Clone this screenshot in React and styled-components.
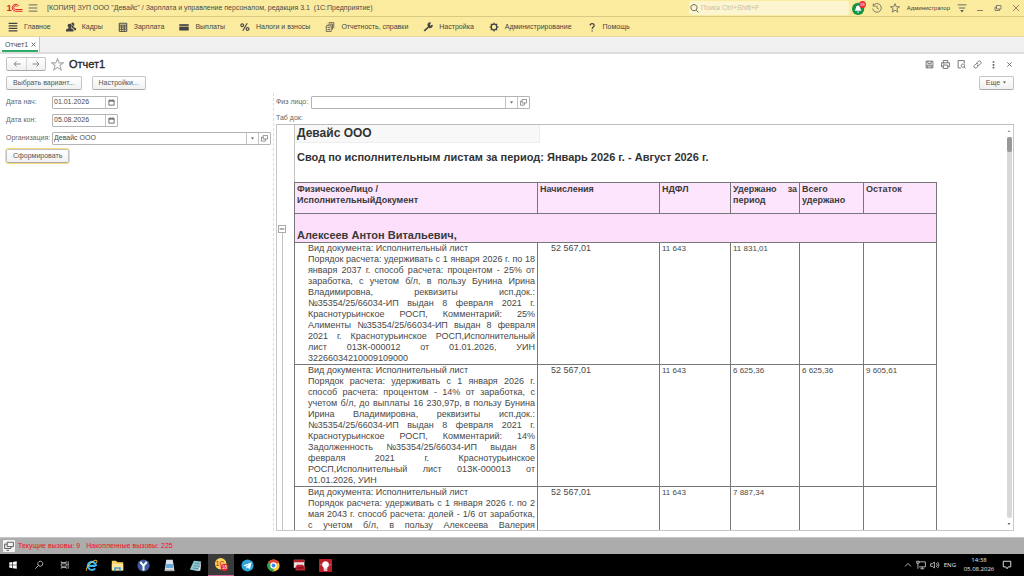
import styled, { createGlobalStyle, css } from 'styled-components';

const GlobalStyle = createGlobalStyle`
  * {
    box-sizing: border-box;
  }
  body {
    margin: 0;
    font-family: 'Liberation Sans', Arial, sans-serif;
    font-size: 7px;
    line-height: 10px;
    color: #4a4a4a;
    background: #fff;
  }
  button,
  input {
    margin: 0;
    font: inherit;
    color: inherit;
  }
`;

const Page = styled.div`
  display: flex;
  flex-direction: column;
  height: 100vh;
  overflow: hidden;
`;

const TitleBar = styled.header`
  display: flex;
  align-items: center;
  flex: none;
  height: 17px;
  padding: 0 2px 0 6px;
  gap: 4px;
  background: #fbeb9e;
  border-bottom: 1px solid #d8ca83;
`;

const AppTitle = styled.span`
  flex: 1;
  padding-left: 4px;
  white-space: nowrap;
`;

const IconButton = styled.button`
  display: flex;
  align-items: center;
  justify-content: center;
  flex: none;
  width: ${(props) => props.$width || 12}px;
  height: 12px;
  padding: 0;
  border: none;
  background: none;
  color: #606060;
`;

const Search = styled.label`
  display: flex;
  align-items: center;
  width: 160px;
  height: 14px;
  padding-left: 1px;
  gap: 2px;
  border-radius: 2px;
  background: #fdf5cf;
`;

const SearchInput = styled.input`
  flex: 1;
  min-width: 0;
  padding: 0;
  border: none;
  outline: none;
  background: none;
  &::placeholder {
    color: #c4bda0;
  }
`;

const WindowTools = styled.div`
  display: flex;
  align-items: center;
  gap: 6px;
`;

const User = styled.span`
  font-size: 6px;
  color: #3c3c3c;
`;

const Menu = styled.nav`
  display: flex;
  align-items: center;
  flex: none;
  height: 20px;
  padding: 0 8px;
  gap: 15px;
  background: #fbeb9e;
  border-bottom: 1px solid #e4d9a0;
`;

const MenuItem = styled.a`
  display: flex;
  align-items: center;
  gap: 6px;
  color: #444;
  text-decoration: none;
  white-space: nowrap;
`;

const TabBar = styled.div`
  display: flex;
  flex: none;
  height: 17px;
  background: #f0f0f0;
  border-bottom: 2px solid #dedede;
`;

const Tab = styled.div`
  display: flex;
  align-items: center;
  gap: 1px;
  padding: 0 2px 0 5px;
  background: linear-gradient(#2fae68, #2fae68) 2px 100% / 36px 2px no-repeat #fff;
  border-right: 1px solid #c4c4c4;
`;

const Form = styled.main`
  display: flex;
  flex-direction: column;
  flex: 1;
  min-height: 0;
  padding: 1px 10px 6px 6px;
`;

const Row = styled.div`
  display: flex;
  align-items: center;
  flex: none;
  height: ${(props) => props.$height || 18}px;
  gap: ${(props) => props.$gap || 0}px;
`;

const Spacer = styled.div`
  flex: 1;
`;

const Heading = styled.h1`
  margin: 0;
  font-size: 11px;
  font-weight: normal;
  line-height: 13px;
  color: #222;
  -webkit-text-stroke: 0.3px #222;
`;

const raised = css`
  border: 1px solid #c3c3c3;
  border-bottom-color: #a8a8a8;
  border-radius: 2px;
  background: linear-gradient(#fff, #f0f0f0);
`;

const History = styled.div`
  ${raised}
  display: flex;
  height: 14px;
  button + button {
    border-left: 1px solid #d4d4d4;
  }
`;

const Button = styled.button`
  ${raised}
  height: 14px;
  padding: 0 6px;
  white-space: nowrap;
  color: #555;
  outline: ${(props) => (props.$main ? '1px solid #f9dc7a' : 'none')};
`;

const Columns = styled.div`
  display: flex;
  flex: 1;
  min-height: 0;
`;

const Side = styled.section`
  flex: none;
  width: 268px;
  border-right: 1px dashed #ddd;
`;

const Content = styled.section`
  display: flex;
  flex-direction: column;
  flex: 1;
  min-width: 0;
  padding-left: 2px;
`;

const Label = styled.label`
  flex: none;
  width: ${(props) => props.$width}px;
  color: #666;
`;

const Field = styled.div`
  display: flex;
  width: ${(props) => props.$width}px;
  height: 13px;
  border: 1px solid #b4b4b4;
  border-radius: 1px;
  background: #fff;
  button {
    height: 11px;
    border-left: 1px solid #c4c4c4;
  }
`;

const FieldInput = styled.input`
  flex: 1;
  min-width: 0;
  padding: 0 1px;
  border: none;
  outline: none;
  background: none;
`;

const Sheet = styled.div`
  display: flex;
  flex: 1;
  min-height: 0;
  overflow: hidden;
  border: 1px solid #c8c8c8;
  border-top-color: #bdbdbd;
`;

const Gutter = styled.div`
  display: flex;
  flex-direction: column;
  flex: none;
  width: 17px;
  padding: 100px 0 0 1px;
`;

const Toggle = styled.button`
  display: flex;
  align-items: center;
  justify-content: center;
  width: 8px;
  height: 8px;
  padding: 0;
  border: 1px solid #aaa;
  background: #fff;
  color: #777;
`;

const GroupLine = styled.div`
  flex: 1;
  margin-left: 4px;
  border-left: 1px solid #c4c4c4;
`;

const Report = styled.div`
  flex: 1;
  min-width: 0;
  border-left: 1px solid #c4c4c4;
  color: #484848;
`;

const Company = styled.h2`
  width: 245px;
  height: 18px;
  margin: 0;
  padding-left: 2px;
  font-size: 12px;
  line-height: 17px;
  color: #333;
  background: #f8f8f8;
  border-right: 1px solid #eee;
  border-bottom: 1px solid #eee;
`;

const ReportTitle = styled.h3`
  height: 39px;
  margin: 0;
  padding: 8px 0 0 2px;
  font-size: 11px;
  line-height: 13px;
  color: #333;
  white-space: nowrap;
`;

const Table = styled.table`
  width: 643px;
  margin-left: -1px;
  table-layout: fixed;
  border-collapse: collapse;
`;

const HeadCell = styled.th`
  height: 31px;
  padding: 1px 2px 0;
  border: 1px solid #777;
  background: #fde5fd;
  font-size: 9px;
  line-height: 11px;
  color: #3a3a3a;
  text-align: justify;
  vertical-align: top;
  white-space: pre-line;
`;

const GroupCell = styled.th`
  height: 29px;
  padding: 0 2px;
  border: 1px solid #777;
  background: #fddffb;
  font-size: 11px;
  line-height: 13px;
  color: #3a3a3a;
  text-align: left;
  vertical-align: bottom;
`;

const Cell = styled.td`
  height: 122px;
  padding: ${(props) => (props.$indent ? '0 2px 0 13px' : '0 2px')};
  border: 1px solid #777;
  font-size: ${(props) => (props.$indent ? 9 : 8)}px;
  line-height: 11px;
  text-align: justify;
  vertical-align: top;
`;

const Paragraph = styled.p`
  margin: 0;
  text-align-last: ${(props) => (props.$full ? 'justify' : 'auto')};
`;

// keeps the number sign next to its digits in justified lines
const CaseNumber = styled.span`
  display: inline-block;
  text-align: left;
  white-space: nowrap;
`;

const ScrollBar = styled.div`
  display: flex;
  flex-direction: column;
  align-items: center;
  flex: none;
  width: 8px;
  padding: 4px 0;
  gap: 4px;
`;

const Track = styled.div`
  flex: 1;
  width: 5px;
  border-radius: 2px;
  background: #d8d8d8;
`;

const Thumb = styled.div`
  height: 15px;
  border-radius: 2px;
  background: #999;
`;

const StatusBar = styled.footer`
  display: flex;
  align-items: center;
  flex: none;
  height: 17px;
  padding-left: 3px;
  gap: 3px;
  background: #acacac;
  border-top: 1px solid #c8c8c8;
  color: #f01018;
`;

const StatusButton = styled(IconButton)`
  background: #f3f3f3;
  border-radius: 1px;
`;

const StatusText = styled.span`
  margin-right: 3px;
`;

const TaskBar = styled.nav`
  display: flex;
  align-items: center;
  flex: none;
  height: 22px;
  background: #000;
  color: #e8e8e8;
`;

const TaskButton = styled.button`
  display: flex;
  align-items: center;
  justify-content: center;
  width: 26px;
  height: 22px;
  padding: 0;
  border: none;
  background: ${(props) => (props.$active ? '#3a3a3a' : 'none')};
  border-bottom: ${(props) => (props.$active ? '1px solid #d9639b' : 'none')};
`;

const Tray = styled.div`
  display: flex;
  align-items: center;
  gap: 4px;
  margin-left: auto;
  padding-right: 12px;
  font-family: 'Open Sans', 'Noto Sans', sans-serif;
  font-size: 6px;
`;

const Clock = styled.time`
  width: 38px;
  line-height: 9px;
  text-align: center;
`;

function Icon({ size = 10, box = 16, children, ...rest }) {
  return (
    <svg
      width={size}
      height={size}
      viewBox={`0 0 ${box} ${box}`}
      fill="none"
      stroke="currentColor"
      strokeWidth="1.5"
      aria-hidden="true"
      {...rest}
    >
      {children}
    </svg>
  );
}

const Logo = () => (
  <svg width="17" height="12" viewBox="0 0 34 24" aria-label="1С">
    <text x="1" y="18" fontSize="19" fontWeight="bold" fill="#e0262d">1</text>
    <path
      d="M25.500 8A7 7 0 1 0 19 18.500H33M22.500 9.500A3.800 3.800 0 1 0 19 15H33"
      fill="none"
      stroke="#e0262d"
      strokeWidth="2"
    />
  </svg>
);

const Burger = () => (
  <Icon><path d="M1 3H15M1 8H15M1 13H15" /></Icon>
);
const StarIcon = ({ size, color }) => (
  <Icon size={size} color={color} strokeWidth="1.3">
    <path d="M8 1L10 6H15.300L11 9.300L12.600 14.700L8 11.500L3.400 14.700L5 9.300L0.700 6H6Z" />
  </Icon>
);
const CloseIcon = ({ size = 8, weight = 1.5 }) => (
  <Icon size={size} strokeWidth={weight}><path d="M2 2L14 14M14 2L2 14" /></Icon>
);
const OpenIcon = () => (
  <Icon size={7}><path d="M5 1H15V9H5ZM5 5H1V14H10V9" /></Icon>
);
const DropIcon = () => (
  <Icon size={5}><path d="M3 5H13L8 11Z" fill="currentColor" stroke="none" /></Icon>
);
const CalendarIcon = () => (
  <Icon size={7}><path d="M2 3H14V14H2ZM2 5H14M5 1V4M11 1V4" strokeWidth="2" /></Icon>
);

const menu = [
  ['Главное', <path d="M1 2H15M1 6H15M1 10H15M1 14H15" strokeWidth="2" />],
  ['Кадры', <path d="M6 3a3 3 0 0 1 2 5.500V10l4 2v3H0v-3l4-2V8.500A3 3 0 0 1 6 3M10 1a3 3 0 0 1 2 5.500V8l4 2v3h-3v-2l-4-2V8a4 4 0 0 0-1-6z" fill="currentColor" stroke="none" />],
  ['Зарплата', <path d="M2 2H14V15H2ZM2 5H14M2 8H14M2 11.500H14M6 5V15M10 5V15" />],
  ['Выплаты', <path d="M1 4H15V6H1ZM1 8H15V13H1Z" fill="currentColor" strokeWidth="1" />],
  ['Налоги и взносы', <path d="M3.500 3a2.200 2.200 0 1 0 .1 0M12 9a2.200 2.200 0 1 0 .1 0M11.500 2L4.500 14" strokeWidth="1.800" />],
  ['Отчетность, справки', <path d="M6 1H14V10M4 3.500H12V12M2 6H10V15H2ZM4 9H8M4 12H8" strokeWidth="1.200" />],
  ['Настройка', <path d="M1 13L8 7a4 4 0 0 1 5-6L11 4l1 2 3-2a4 4 0 0 1-6 5L3 15Z" fill="currentColor" stroke="none" />],
  ['Администрирование', <><circle cx="8" cy="8" r="4.500" strokeWidth="2" /><path d="M8 1V4M8 12V15M1 8H4M12 8H15M3 3L5 5M11 11L13 13M13 3L11 5M3 13L5 11" strokeWidth="2" /></>],
  ['Помощь', <path d="M5 5.500C5 1.500 11.500 1.500 11.500 5.500C11.500 8 8.200 8 8.200 11M8.200 13V15" strokeWidth="2" />],
];

const columns = [243, 122, 71, 69, 64, 73];

const heads = [
  'ФизическоеЛицо /\nИсполнительныйДокумент',
  'Начисления',
  'НДФЛ',
  'Удержано за период',
  'Всего удержано',
  'Остаток',
];

const rows = [
  {
    text: 'Порядок расчета: удерживать с 1 января 2026 г. по 18 января 2037 г. способ расчета: процентом - 25% от заработка, с учетом б/л, в пользу Бунина Ирина Владимировна, реквизиты исп.док.: №35354/25/66034-ИП выдан 8 февраля 2021 г. Краснотурьинское РОСП, Комментарий: 25% Алименты №35354/25/66034-ИП выдан 8 февраля 2021 г. Краснотурьинское РОСП,Исполнительный лист 01ЗК-000012 от 01.01.2026, УИН 32266034210009109000',
    values: ['11 643', '11 831,01', '', ''],
  },
  {
    text: 'Порядок расчета: удерживать с 1 января 2026 г. способ расчета: процентом - 14% от заработка, с учетом б/л, до выплаты 16 230,97р, в пользу Бунина Ирина Владимировна, реквизиты исп.док.: №35354/25/66034-ИП выдан 8 февраля 2021 г. Краснотурьинское РОСП, Комментарий: 14% Задолженность №35354/25/66034-ИП выдан 8 февраля 2021 г. Краснотурьинское РОСП,Исполнительный лист 01ЗК-000013 от 01.01.2026, УИН',
    values: ['11 643', '6 625,36', '6 625,36', '9 605,61'],
  },
  {
    text: 'Порядок расчета: удерживать с 1 января 2026 г. по 2 мая 2043 г. способ расчета: долей - 1/6 от заработка, с учетом б/л, в пользу Алексеева Валерия',
    values: ['11 643', '7 887,34', '', ''],
    full: true,
  },
];

const tasks = [
  ['Пуск', <path d="M2 4L7 3V7.500H2ZM8 3L14 2V7.500H8ZM2 8.500H7V13L2 12ZM8 8.500H14V14L8 13Z" fill="#fff" stroke="none" />],
  ['Поиск', <path d="M10 2a4 4 0 1 0 .1 0M7 9L2 14" strokeWidth="1.200" />],
  ['Представление задач', <path d="M2 2V4H10V2M2 14V12H10V14M2 6H10V10H2ZM13 2V14M12 7H14" strokeWidth="1.100" />],
  ['Internet Explorer', <><path d="M13 8.500H5M13.500 8.500A5 5 0 1 0 12.500 11.500" stroke="#39b8f2" strokeWidth="2.600" /><path d="M2 14.500C0 11 9 1.500 13.500 1.500C15 1.500 15 3.500 14 5" stroke="#f5c736" strokeWidth="1.200" /></>],
  ['Проводник', <><path d="M1 2H6L8 4H15V14H1Z" fill="#f8d264" stroke="none" /><path d="M1 6H15V14H1Z" fill="#ffe596" stroke="none" /><path d="M4 15V10H12V15H10V12H6V15Z" fill="#3b9ad9" stroke="none" /></>],
  ['Яндекс Браузер', <><circle cx="8" cy="8" r="7.500" fill="#405b9b" stroke="none" /><path d="M4 3.500L8 8.500L12 3.500M8 8V14" stroke="#fff" strokeWidth="2.500" /></>],
  ['Сервер', <><path d="M4 1H12L14 14H2Z" fill="#d9e3e8" stroke="none" /><path d="M4 6H12L12.500 11H3.500Z" fill="#68a8d8" stroke="none" /><path d="M2 13H14V15H2Z" fill="#aaa" stroke="none" /></>],
  ['Блокнот', <><path d="M6 2L15 3L11 15L1 13Z" fill="#8fc6cf" stroke="none" /><path d="M7 5L13 6M6 8L12 9M5 11L11 12" stroke="#4d8996" strokeWidth="1" /><path d="M15 3L11 15L14 14Z" fill="#eee" stroke="none" /></>],
  ['1С:Предприятие', <><circle cx="7" cy="7" r="7" fill="#fad65a" stroke="none" /><text x="1" y="10" fontSize="8" fontWeight="bold" fill="#dc3c28" stroke="none">1С</text><circle cx="11.500" cy="11.500" r="4.500" fill="#e8232c" stroke="none" /><text x="8.500" y="13.500" fontSize="5.500" fill="#fff" stroke="none">18</text></>],
  ['Telegram', <><circle cx="8" cy="8" r="7.500" fill="#2ea4db" stroke="none" /><path d="M3 8L13 4L11 12.500L8 10.500L6.500 12V9.500L10 6.500L5.500 9Z" fill="#fff" stroke="none" /></>],
  ['Chrome', <><circle cx="8" cy="8" r="7.500" fill="#f3c632" stroke="none" /><path d="M8 8L1.500 4.300A7.500 7.500 0 0 1 14.500 4.300Z" fill="#e14134" stroke="none" /><path d="M8 8L1.500 4.300A7.500 7.500 0 0 0 8 15.500Z" fill="#2ba14b" stroke="none" /><circle cx="8" cy="8" r="3.200" fill="#4285f4" stroke="#fff" /></>],
  ['Отчеты', <><path d="M1 1H14V11H1Z" fill="#e9e0e0" stroke="none" /><path d="M1 1H14V4H1Z" fill="#b82128" stroke="none" /><path d="M3 10L5 7H12L15 10V14H3Z" fill="#b9202b" stroke="none" /><path d="M5 11H13" stroke="#701018" /></>],
  ['Подсказки', <><rect width="16" height="16" rx="1" fill="#bb1e2b" stroke="none" /><path d="M8 3a4 4 0 0 1 2 7.500V12H6V10.500A4 4 0 0 1 8 3M6 13H10V14H6ZM1 7H3M13 7H15" fill="#fff" stroke="#fff" strokeWidth=".5" /></>],
];

const reportTools = [
  ['Сохранить', <path d="M2 2H14V14H2ZM5 2V6H11V2M4 14V9H12V14M6 11H10" />],
  ['Печать', <path d="M4 5V1H12V5M4 12H1V5H15V12H12M4 9H12V15H4ZM4 7H6" />],
  ['Просмотр', <path d="M7 14H2V1H13V6M10.500 7a3 3 0 1 0 .1 0M12.500 12L15 15" />],
  ['Ссылка', <path d="M7 5L10 2a3 3 0 0 1 4 4L11 9a3 3 0 0 1-4 0M9 11L6 14a3 3 0 0 1-4-4L5 7a3 3 0 0 1 4 0" />],
  ['Меню', <path d="M8 2V5M8 7V10M8 12V15" strokeWidth="3" />],
  ['Закрыть', <path d="M4 4L12 12M12 4L4 12" />],
];

function Choice() {
  return (
    <>
      <IconButton type="button" aria-label="Список"><DropIcon /></IconButton>
      <IconButton type="button" aria-label="Открыть"><OpenIcon /></IconButton>
    </>
  );
}

function DateRow({ id, label, value }) {
  return (
    <Row>
      <Label htmlFor={id} $width={46}>{label}</Label>
      <Field $width={66}>
        <FieldInput id={id} defaultValue={value} />
        <IconButton type="button" aria-label="Календарь"><CalendarIcon /></IconButton>
      </Field>
    </Row>
  );
}

function Terms({ text, full }) {
  return (
    <Paragraph $full={full}>
      {text.split(/(№\S+)/).map((part, i) =>
        part.startsWith('№') ? <CaseNumber key={i}>{part}</CaseNumber> : part
      )}
    </Paragraph>
  );
}

function ReportTable() {
  return (
    <Table>
      <colgroup>
        {columns.map((width, i) => (
          <col key={i} style={{ width }} />
        ))}
      </colgroup>
      <thead>
        <tr>
          {heads.map((head) => (
            <HeadCell key={head}>{head}</HeadCell>
          ))}
        </tr>
      </thead>
      <tbody>
        <tr>
          <GroupCell colSpan={6}>Алексеев Антон Витальевич,</GroupCell>
        </tr>
        {rows.map((row) => (
          <tr key={row.text}>
            <Cell $indent>
              <Paragraph>Вид документа: Исполнительный лист</Paragraph>
              <Terms text={row.text} full={row.full} />
            </Cell>
            <Cell $indent>52 567,01</Cell>
            {row.values.map((value, i) => (
              <Cell key={i}>{value}</Cell>
            ))}
          </tr>
        ))}
      </tbody>
    </Table>
  );
}

export default function App() {
  return (
    <Page>
      <GlobalStyle />
      <TitleBar>
        <Logo />
        <IconButton type="button" aria-label="Меню"><Burger /></IconButton>
        <AppTitle>
          [КОПИЯ] ЗУП ООО "Девайс" / Зарплата и управление персоналом, редакция 3.1&nbsp; (1С:Предприятие)
        </AppTitle>
        <Search>
          <Icon size={9}><path d="M7 1a5.500 5.500 0 1 0 .1 0M11 11L15 15" /></Icon>
          <SearchInput aria-label="Поиск" placeholder="Поиск Ctrl+Shift+F" />
        </Search>
        <WindowTools>
          <IconButton type="button" aria-label="Уведомления">
            <Icon size={14} style={{ flex: 'none' }}>
              <circle cx="7" cy="9" r="7" fill="#159447" stroke="none" />
              <path d="M3 11C5 9 4 5 7 5S9 9 11 11ZM6 12H8V13H6Z" fill="#fff" stroke="none" />
              <circle cx="12" cy="4" r="4" fill="#ee2d32" stroke="none" />
              <text x="9" y="6" fontSize="5" fill="#fff" stroke="none">19</text>
            </Icon>
          </IconButton>
          <IconButton type="button" aria-label="История">
            <Icon><path d="M2 4A7 7 0 1 1 1 9M2 1V5H6M8 4V8L11 10" strokeWidth="1.300" /></Icon>
          </IconButton>
          <IconButton type="button" aria-label="Избранное"><StarIcon size={10} /></IconButton>
          <User>Администратор</User>
          <IconButton type="button" aria-label="Сервис">
            <Icon><path d="M1 3H15M3 8H13" /><path d="M5 11H11L8 15Z" fill="currentColor" stroke="none" /></Icon>
          </IconButton>
          <IconButton type="button" aria-label="Свернуть"><Icon size={8}><path d="M2 13H14" /></Icon></IconButton>
          <IconButton type="button" aria-label="Развернуть">
            <Icon size={8}><path d="M5 3H14V10H5ZM5 6H2V13H11V10" /></Icon>
          </IconButton>
          <IconButton type="button" aria-label="Закрыть"><CloseIcon /></IconButton>
        </WindowTools>
      </TitleBar>
      <Menu>
        {menu.map(([name, shape]) => (
          <MenuItem href="#" key={name}>
            <Icon>{shape}</Icon>
            {name}
          </MenuItem>
        ))}
      </Menu>
      <TabBar>
        <Tab>
          Отчет1
          <IconButton type="button" $width={8} aria-label="Закрыть вкладку">
            <CloseIcon size={5} weight={3} />
          </IconButton>
        </Tab>
      </TabBar>
      <Form>
        <Row $gap={5}>
          <History>
            <IconButton type="button" $width={19} aria-label="Назад">
              <Icon size={8} color="#888"><path d="M15 8H2M7 3L2 8L7 13" strokeWidth="2" /></Icon>
            </IconButton>
            <IconButton type="button" $width={19} aria-label="Вперед">
              <Icon size={8} color="#888"><path d="M1 8H14M9 3L14 8L9 13" strokeWidth="2" /></Icon>
            </IconButton>
          </History>
          <StarIcon size={13} color="#aaa" />
          <Heading>Отчет1</Heading>
          <Spacer />
          <Row $gap={6}>
            {reportTools.map(([name, shape]) => (
              <IconButton type="button" key={name} $width={10} aria-label={name}>
                <Icon size={9}>{shape}</Icon>
              </IconButton>
            ))}
          </Row>
        </Row>
        <Row $height={20} $gap={10}>
          <Button type="button">Выбрать вариант...</Button>
          <Button type="button">Настройки...</Button>
          <Spacer />
          <Button type="button">Еще <DropIcon /></Button>
        </Row>
        <Columns>
          <Side>
            <DateRow id="from" label="Дата нач:" value="01.01.2026" />
            <DateRow id="to" label="Дата кон:" value="05.08.2026" />
            <Row>
              <Label htmlFor="org" $width={46}>Организация:</Label>
              <Field $width={219}>
                <FieldInput id="org" defaultValue="Девайс ООО" />
                <Choice />
              </Field>
            </Row>
            <Row>
              <Button type="button" $main>Сформировать</Button>
            </Row>
          </Side>
          <Content>
            <Row>
              <Label htmlFor="person" $width={35}>Физ лицо:</Label>
              <Field $width={219}>
                <FieldInput id="person" />
                <Choice />
              </Field>
            </Row>
            <Row $height={13}><Label as="span" $width={46}>Таб док:</Label></Row>
            <Sheet>
              <Gutter>
                <Toggle type="button" aria-label="Свернуть группу">
                  <Icon size={6}><path d="M2 8H14" strokeWidth="3" /></Icon>
                </Toggle>
                <GroupLine />
              </Gutter>
              <Report>
                <Company>Девайс ООО</Company>
                <ReportTitle>
                  Свод по исполнительным листам за период: Январь 2026 г. - Август 2026 г.
                </ReportTitle>
                <ReportTable />
              </Report>
              <ScrollBar>
                <Icon size={4}><path d="M2 12L8 4L14 12Z" fill="#999" stroke="none" /></Icon>
                <Track><Thumb /></Track>
                <Icon size={4}><path d="M2 4L8 12L14 4Z" fill="#666" stroke="none" /></Icon>
              </ScrollBar>
            </Sheet>
          </Content>
        </Columns>
      </Form>
      <StatusBar>
        <StatusButton type="button" aria-label="Окна">
          <Icon size={10} color="#555"><path d="M5 2H15V9H5ZM5 5H1V12H11V9M4 15H8" /></Icon>
        </StatusButton>
        <StatusText>Текущие вызовы: 9</StatusText>
        <StatusText>Накопленные вызовы: 225</StatusText>
      </StatusBar>
      <TaskBar>
        {tasks.map(([name, shape], i) => (
          <TaskButton type="button" key={name} aria-label={name} $active={name === '1С:Предприятие'}>
            <Icon size={i < 3 ? 10 : 13}>{shape}</Icon>
          </TaskButton>
        ))}
        <Tray>
          <Icon size={8}><path d="M2 11L8 5L14 11" /></Icon>
          <Icon><path d="M5 3H15V11H5M10 11V14M7 14H13M1 2H5V5H1ZM3 5V14" strokeWidth="1.200" /></Icon>
          <Icon><path d="M1 6H4L7 3V13L4 10H1ZM10 5C12 7 12 9 10 11M12 3C15 6 15 10 12 13" strokeWidth="1.200" /></Icon>
          <span>ENG</span>
          <Clock>14:38<br />05.08.2026</Clock>
          <Icon><path d="M2 2H14V11H10L8 14L6 11H2Z" /></Icon>
        </Tray>
      </TaskBar>
    </Page>
  );
}
